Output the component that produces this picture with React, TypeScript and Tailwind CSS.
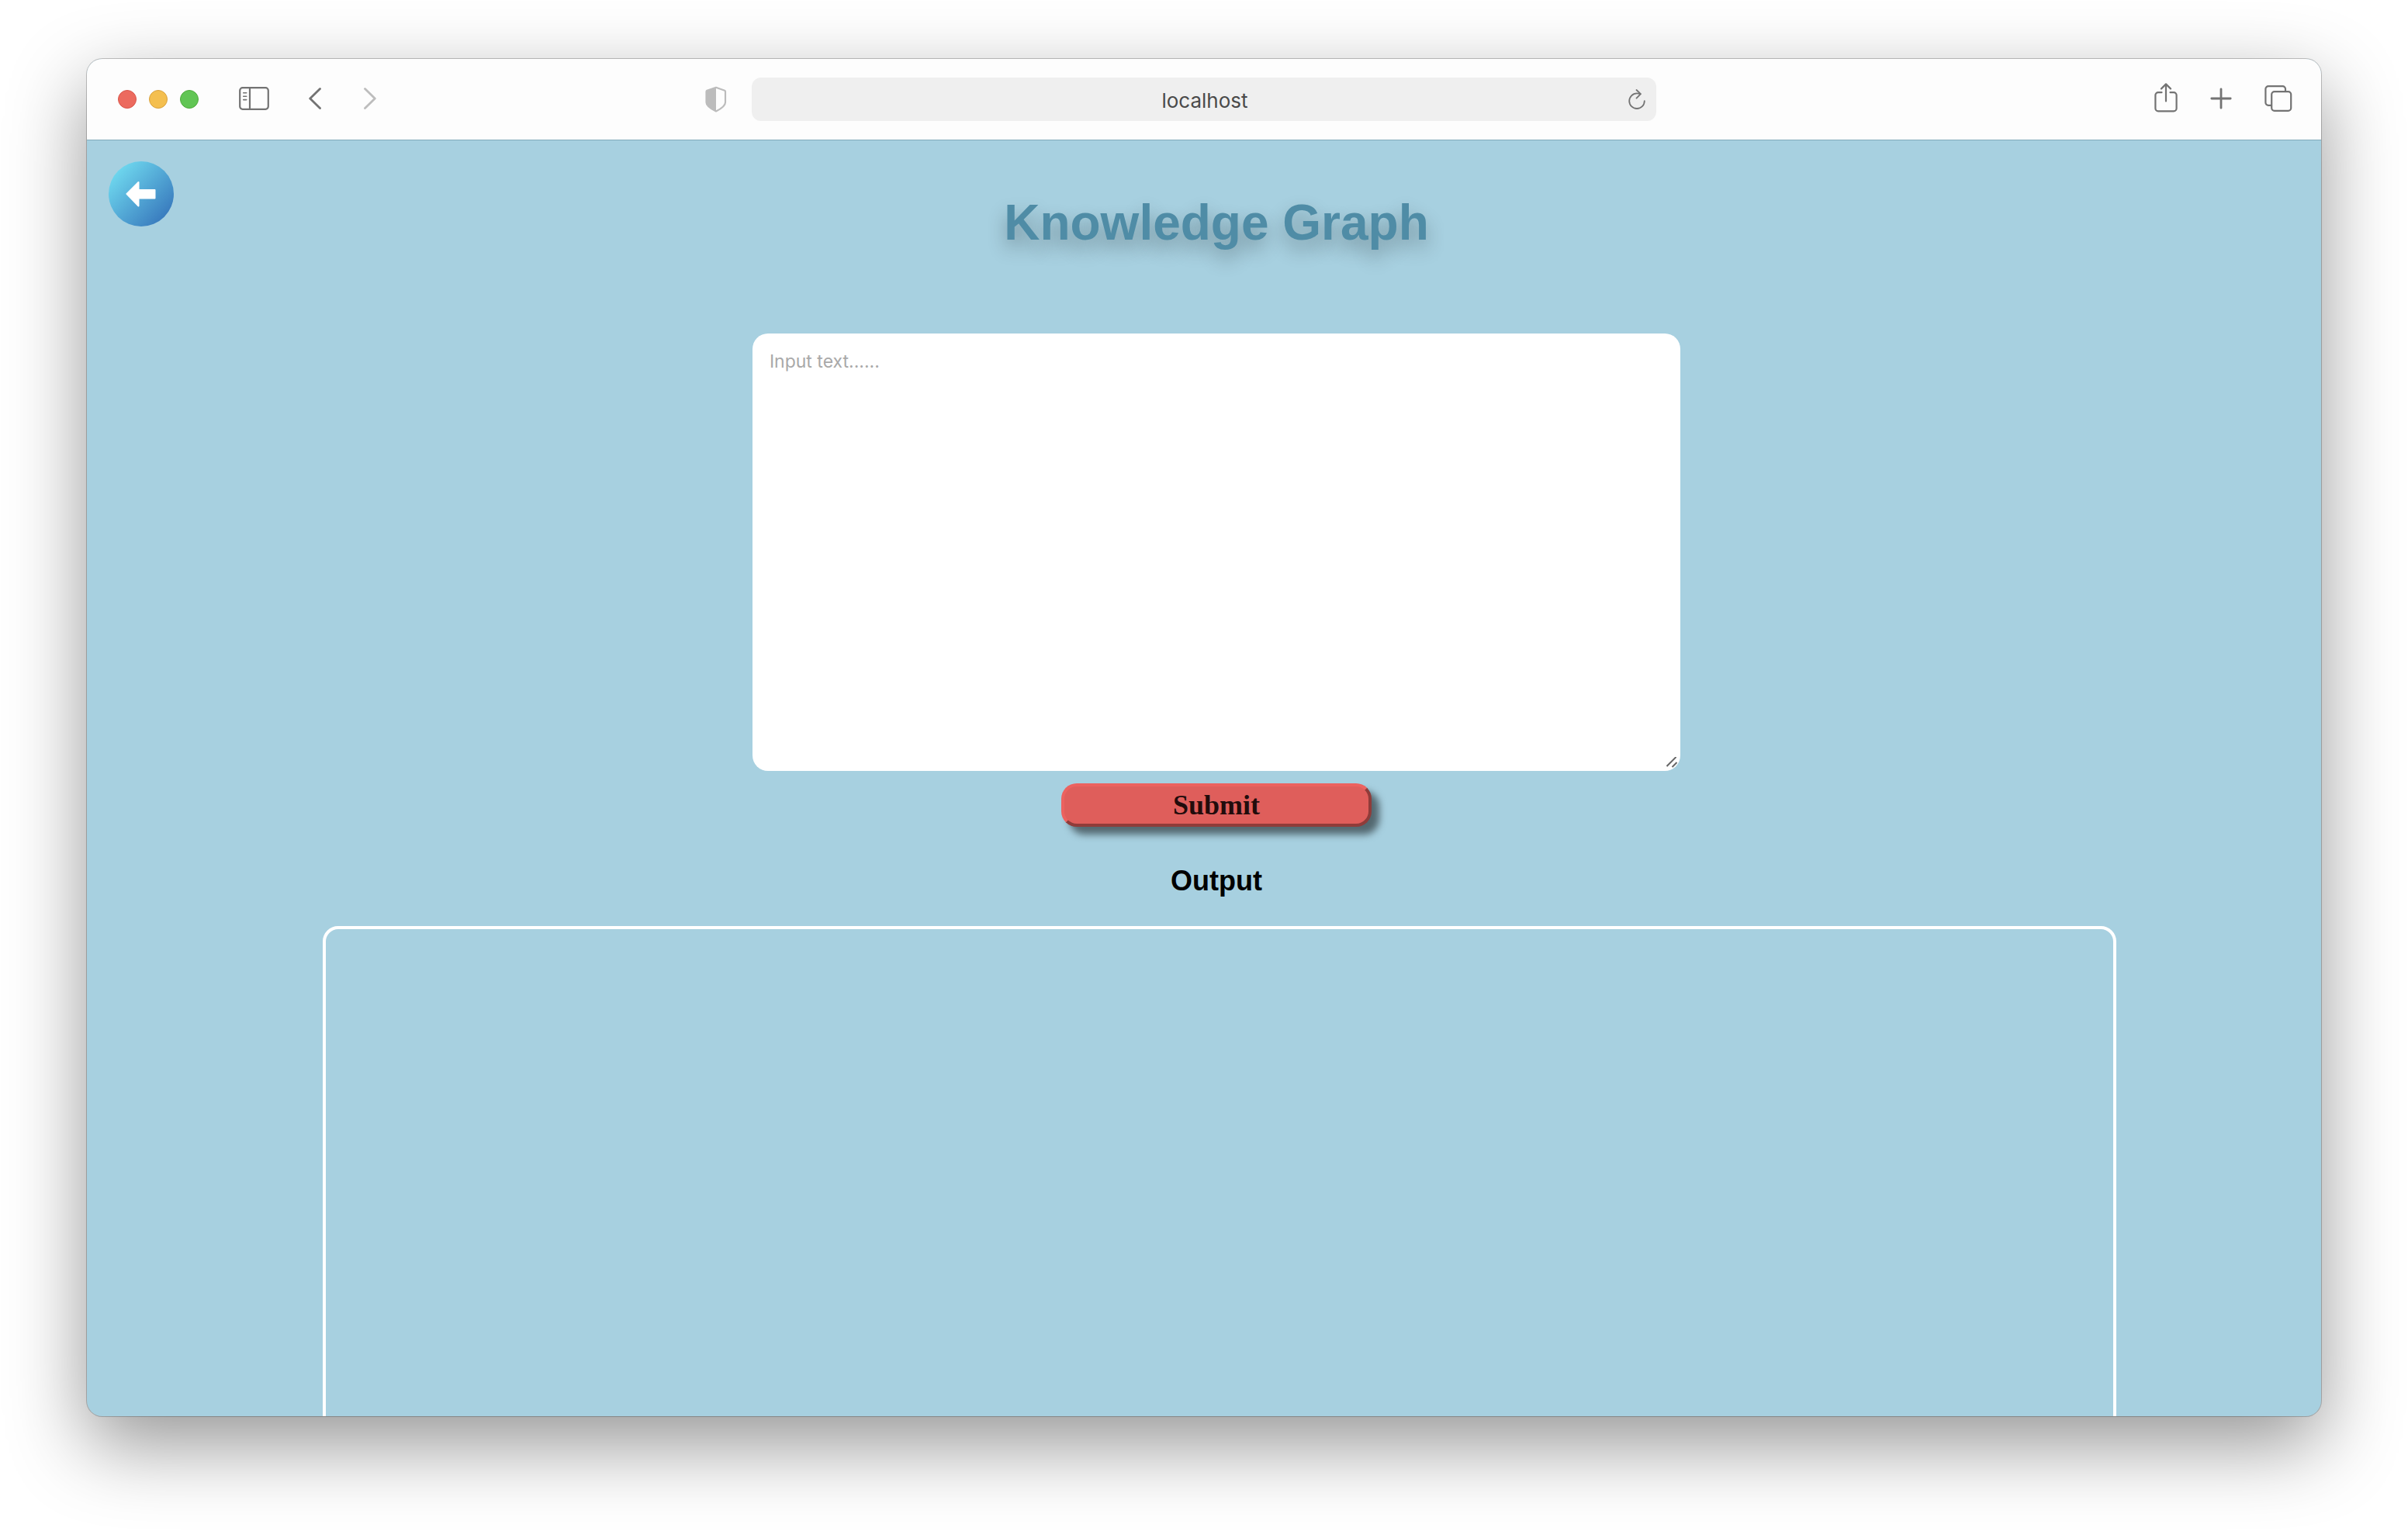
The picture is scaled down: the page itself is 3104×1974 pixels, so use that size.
import React from "react";

const iconProps = {
  fill: "none",
  stroke: "currentColor",
  strokeLinecap: "round" as const,
  strokeLinejoin: "round" as const,
  "aria-hidden": true,
};

function SidebarIcon() {
  return (
    <svg {...iconProps} className="h-[30px] w-[39px]" viewBox="0 0 39 30" strokeWidth={2.2}>
      <rect x="1.2" y="1.2" width="36.6" height="27.6" rx="3.5" />
      <path d="M14 1.5V28.5" />
      <path d="M5.7 7.8h4M5.7 12.2h4M5.7 16.6h4" strokeWidth={1.6} />
    </svg>
  );
}

function ChevronIcon({ forward = false }: { forward?: boolean }) {
  return (
    <svg {...iconProps} className="h-7 w-4" viewBox="0 0 16 28" strokeWidth={2.8}>
      <path d={forward ? "M1.5 1.5L14.3 14L1.5 26.5" : "M14.5 1.5L1.7 14L14.5 26.5"} />
    </svg>
  );
}

function ShieldIcon() {
  return (
    <svg {...iconProps} className="h-[34px] w-7" viewBox="0 0 28 34" strokeWidth={2.2}>
      <path d="M14 1.8L25.2 5.8Q26 6.2 26 7V21Q26 26.5 14 32.5Q1.5 26.5 1.5 21V7Q1.5 6.2 2.3 5.8Z" />
      <path d="M14 1.8V32.5Q1.5 26.5 1.5 21V7Q1.5 6.2 2.3 5.8Z" fill="currentColor" stroke="none" />
    </svg>
  );
}

function ReloadIcon() {
  return (
    <svg {...iconProps} className="h-[26px] w-[22px]" viewBox="0 0 22 26" strokeWidth={1.8}>
      <path d="M15.5 6.2Q13 5.4 11 5.4A9.8 9.8 0 1 0 20.8 15.2" />
      <path d="M10.5 1L15.9 6.2L10.5 11.6" />
    </svg>
  );
}

function ShareIcon() {
  return (
    <svg {...iconProps} className="h-[38px] w-[30px]" viewBox="0 0 30 38" strokeWidth={2.2}>
      <path d="M9.5 12.2H5A3.6 3.6 0 0 0 1.4 15.8V32.8A3.6 3.6 0 0 0 5 36.4H25A3.6 3.6 0 0 0 28.6 32.8V15.8A3.6 3.6 0 0 0 25 12.2H20.5" />
      <path d="M15 23.5V1.6M9 7.4L15 1.4L21 7.4" />
    </svg>
  );
}

function PlusIcon() {
  return (
    <svg {...iconProps} className="size-7" viewBox="0 0 28 28" strokeWidth={2.8}>
      <path d="M14 1.8V26.2M1.8 14H26.2" />
    </svg>
  );
}

function TabsIcon() {
  return (
    <svg {...iconProps} className="h-[34px] w-9" viewBox="0 0 36 34" strokeWidth={2.2}>
      <path d="M8.8 25.8H5A3.6 3.6 0 0 1 1.4 22.2V4.8A3.6 3.6 0 0 1 5 1.2H23.4A3.6 3.6 0 0 1 27 4.8V8" />
      <rect x="9.2" y="8.2" width="25" height="24.6" rx="3.6" />
    </svg>
  );
}

function BackArrowIcon() {
  return (
    <svg className="size-[84px]" viewBox="0 0 84 84" aria-hidden>
      <defs>
        <linearGradient id="back-fill" x1="0.12" y1="0.18" x2="0.84" y2="0.86">
          <stop offset="0" stopColor="#6dd5ed" />
          <stop offset="1" stopColor="#3a7dbf" />
        </linearGradient>
      </defs>
      <circle cx="42" cy="42" r="42" fill="url(#back-fill)" />
      <path
        d="M23.5 42L38.5 27V37H59.5V47.5H38.5V57.5Z"
        fill="#fff"
        stroke="#fff"
        strokeWidth="2"
        strokeLinejoin="round"
      />
    </svg>
  );
}

function Toolbar() {
  return (
    <header className="grid h-[104px] shrink-0 grid-cols-[857fr_1166fr_857fr] items-center bg-[#fdfdfd] text-[#737373]">
      <div className="flex items-center pr-8 pl-10">
        <div className="flex gap-4">
          <button aria-label="Close" className="size-6 rounded-full border border-[#d9564b] bg-[#ec6a5e]" />
          <button aria-label="Minimize" className="size-6 rounded-full border border-[#d9a23e] bg-[#f4bf4f]" />
          <button aria-label="Zoom" className="size-6 rounded-full border border-[#4faa3d] bg-[#61c554]" />
        </div>
        <button aria-label="Sidebar" className="ml-[52px] pb-0.5">
          <SidebarIcon />
        </button>
        <button aria-label="Back" className="ml-[51px] pb-0.5">
          <ChevronIcon />
        </button>
        <button aria-label="Forward" className="ml-[55px] pb-0.5 text-[#bdbdbd]">
          <ChevronIcon forward />
        </button>
        <button aria-label="Privacy report" className="ml-auto text-[#bcbcbc]">
          <ShieldIcon />
        </button>
      </div>
      <div className="flex h-14 items-center rounded-xl bg-[#efefef] px-3.5">
        <input
          aria-label="Address"
          defaultValue="localhost"
          className="min-w-0 flex-1 bg-transparent pt-0.5 pl-6 text-center font-[Inter,sans-serif] text-[26px] text-[#4a4a4a] outline-none"
        />
        <button aria-label="Reload">
          <ReloadIcon />
        </button>
      </div>
      <div className="flex items-center justify-end gap-[42px] pr-[37px]">
        <button aria-label="Share" className="pb-1">
          <ShareIcon />
        </button>
        <button aria-label="New tab" className="pb-0.5">
          <PlusIcon />
        </button>
        <button aria-label="Tab overview" className="pb-0.5">
          <TabsIcon />
        </button>
      </div>
    </header>
  );
}

export default function App() {
  return (
    <div className="flex h-screen flex-col overflow-hidden bg-white px-28 pt-[76px] pb-[148px] font-['Liberation_Sans',Arial,sans-serif]">
      <div className="flex min-h-0 flex-1 flex-col overflow-hidden rounded-[20px] bg-[#a7d0e0] shadow-[0_0_0_1px_rgba(0,0,0,0.22),0_36px_100px_rgba(0,0,0,0.42)]">
        <Toolbar />
        <main className="relative flex min-h-0 flex-1 flex-col items-center overflow-hidden border-t border-[#82aaba] pl-8">
          <a href="#back" aria-label="Back" className="absolute top-[27px] left-7 rounded-full">
            <BackArrowIcon />
          </a>
          <h1 className="mt-[69px] text-[64px] leading-[74px] font-bold text-[#4f8ca6] [text-shadow:0_12px_24px_rgba(0,0,0,0.3)]">
            Knowledge Graph
          </h1>
          <form className="mt-[106px] flex w-full flex-col items-center" onSubmit={(e) => e.preventDefault()}>
            <div className="relative w-[42%]">
              <textarea
                aria-label="Input text"
                placeholder="Input text......"
                className="block h-[564px] w-full resize-none rounded-[20px] bg-white px-[22px] py-[22px] font-[Inter,sans-serif] text-[23px] leading-7 outline-none placeholder:text-[#a9a9a9]"
              />
              <svg
                className="pointer-events-none absolute right-1 bottom-1 size-3.5"
                viewBox="0 0 14 14"
                stroke="#656565"
                strokeWidth="2"
                aria-hidden
              >
                <path d="M0.5 12L12.5 0M7.5 13L13.5 7" />
              </svg>
            </div>
            <button
              type="submit"
              className="mt-4 h-14 w-[400px] rounded-[20px] border-4 border-t-[#ec625f] border-r-[#8f3c3a] border-b-[#8f3c3a] border-l-[#ec625f] bg-[#df5e5b] font-['Liberation_Serif',serif] text-4xl leading-[48px] font-bold text-[#220c0c] shadow-[10px_10px_10px_rgba(0,0,0,0.5)]"
            >
              Submit
            </button>
          </form>
          <h2 className="mt-[49px] text-4xl leading-[42px] font-bold text-black">Output</h2>
          <section
            aria-label="Output"
            className="mt-[37px] ml-2 h-[1200px] w-[2312px] max-w-[82%] shrink-0 rounded-[20px] border-4 border-white"
          />
        </main>
      </div>
    </div>
  );
}
